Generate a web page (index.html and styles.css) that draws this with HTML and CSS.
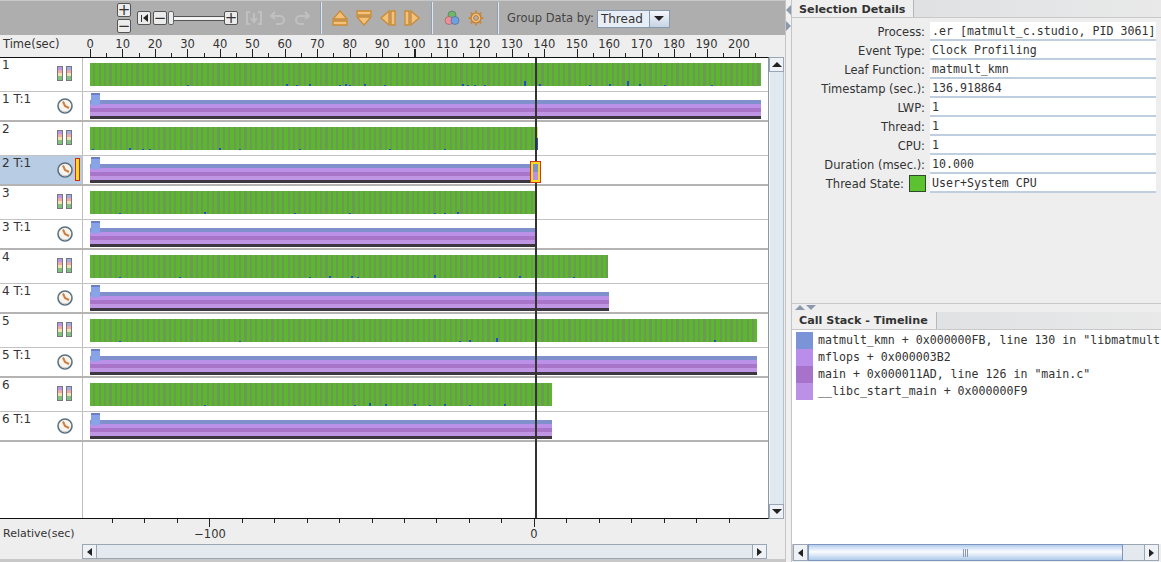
FILE: index.html
```html
<!DOCTYPE html>
<html lang="en">
<head>
  <meta charset="UTF-8">
  <title>Timeline</title>
  <link rel="stylesheet" href="styles.css">
</head>
<body>
  <svg class="defs" width="0" height="0">
    <symbol id="stack" viewBox="0 0 15 15">
      <g shape-rendering="crispEdges">
        <rect x="0" y="0" width="6" height="15" fill="#77767c"/>
        <rect x="9" y="0" width="6" height="15" fill="#77767c"/>
        <rect x="1" y="1" width="4" height="3" fill="#b79be0"/>
        <rect x="1" y="4" width="4" height="3" fill="#f0a8ae"/>
        <rect x="1" y="7" width="4" height="3" fill="#ece6a8"/>
        <rect x="1" y="10" width="4" height="4" fill="#84c084"/>
        <rect x="10" y="1" width="4" height="3" fill="#a3ace6"/>
        <rect x="10" y="4" width="4" height="3" fill="#f0a8ae"/>
        <rect x="10" y="7" width="4" height="3" fill="#ece6a8"/>
        <rect x="10" y="10" width="4" height="4" fill="#84c084"/>
      </g>
    </symbol>
    <symbol id="clock" viewBox="0 0 16 16">
      <circle cx="8" cy="8" r="7" fill="#f8f4ea" stroke="#5a7184" stroke-width="1.6"/>
      <path d="M6 3.5 L8 8 L12 10" fill="none" stroke="#c8814a" stroke-width="2"/>
      <path d="M3.5 11.5a5.5 5.5 0 0 0 9 0" fill="none" stroke="#c9ccd0"/>
    </symbol>
    <symbol id="eject-up" viewBox="0 0 16 16">
      <path d="M8 1 L15 9 H1 Z M1 11 H15 V15 H1 Z" fill="#f3c27a" stroke="#cc8a34" stroke-width="1.3"/>
    </symbol>
    <symbol id="eject-down" viewBox="0 0 16 16">
      <path d="M1 1 H15 V5 H1 Z M1 7 H15 L8 15 Z" fill="#f3c27a" stroke="#cc8a34" stroke-width="1.3"/>
    </symbol>
    <symbol id="eject-left" viewBox="0 0 16 16">
      <path d="M9 1 L1 8 L9 15 Z M11 1 H15 V15 H11 Z" fill="#f3c27a" stroke="#cc8a34" stroke-width="1.3"/>
    </symbol>
    <symbol id="eject-right" viewBox="0 0 16 16">
      <path d="M1 1 H5 V15 H1 Z M7 1 L15 8 L7 15 Z" fill="#f3c27a" stroke="#cc8a34" stroke-width="1.3"/>
    </symbol>
  </svg>

  <div class="app">
    <div class="left">
      <div class="toolbar">
        <div class="zoom-stack">
          <button class="tool">+</button>
          <button class="tool">&minus;</button>
        </div>
        <div class="slider">
          <button class="tool reset"><span class="reset-bar"></span><span class="arrow-left"></span></button>
          <button class="tool">&minus;</button>
          <span class="thumb"></span>
          <span class="slider-line"></span>
          <button class="tool">+</button>
        </div>
        <div class="disabled-icons">
          <svg width="16" height="16" viewBox="0 0 16 16"><path d="M4 2H1V14H4M12 2H15V14H12M8 3V11M5 8L8 12L11 8" fill="none" stroke="#c0c0c0" stroke-width="2"/></svg>
          <svg width="16" height="16" viewBox="0 0 16 16"><path d="M5 2L1 6L5 9M2 6H10A4 4 0 0 1 10 14H6" fill="none" stroke="#c0c0c0" stroke-width="2"/></svg>
          <svg width="16" height="16" viewBox="0 0 16 16"><path d="M11 2L15 6L11 9M14 6H6A4 4 0 0 0 6 14H10" fill="none" stroke="#c0c0c0" stroke-width="2"/></svg>
        </div>
        <span class="tool-sep first"></span>
        <div class="nav-icons">
          <svg width="16" height="16"><use href="#eject-up"/></svg>
          <svg width="16" height="16"><use href="#eject-down"/></svg>
          <svg width="16" height="16"><use href="#eject-left"/></svg>
          <svg width="16" height="16"><use href="#eject-right"/></svg>
        </div>
        <span class="tool-sep second"></span>
        <div class="misc-icons">
          <svg width="16" height="16" viewBox="0 0 16 16">
            <circle cx="8" cy="5" r="4" fill="#6fb56a" stroke="#55705a" stroke-width=".6"/>
            <circle cx="5" cy="10.5" r="4" fill="#ee8f97" stroke="#8a5a62" stroke-width=".6"/>
            <circle cx="11" cy="10.5" r="4" fill="#6f9fe0" stroke="#4f6688" stroke-width=".6"/>
          </svg>
          <svg width="16" height="16" viewBox="0 0 16 16">
            <circle cx="8" cy="8" r="5" fill="#f3c27a" stroke="#b87a34" stroke-width="1.2"/>
            <circle cx="8" cy="8" r="2.4" fill="#b0b0b0" stroke="#b87a34"/>
            <path d="M8 0.5V3M8 13V15.5M0.5 8H3M13 8H15.5M2.7 2.7L4.5 4.5M11.5 11.5L13.3 13.3M2.7 13.3L4.5 11.5M11.5 4.5L13.3 2.7" stroke="#c98a3e" stroke-width="2"/>
          </svg>
        </div>
        <span class="tool-sep third"></span>
        <span class="group-label">Group Data by:</span>
        <div class="combo">
          <span class="combo-text">Thread</span>
          <span class="combo-btn"><span class="arrow-down"></span></span>
        </div>
      </div>

      <div class="ruler">
        <div class="axis-title">Time(sec)</div>
        <div class="scale">
          <div class="scale-labels">
            <span>0</span><span>10</span><span>20</span><span>30</span><span>40</span><span>50</span><span>60</span>
            <span>70</span><span>80</span><span>90</span><span>100</span><span>110</span><span>120</span><span>130</span>
            <span>140</span><span>150</span><span>160</span><span>170</span><span>180</span><span>190</span><span>200</span>
          </div>
        </div>
      </div>

      <div class="main">
        <div class="rows">
          <div class="row event">
            <div class="label"><span>1</span><svg class="icon" width="15" height="15"><use href="#stack"/></svg></div>
            <div class="track"><div class="bar" style="width:671px">
              <svg class="specks" width="671" height="23"><path d="M98 23v-1M197 23v-2M207 23v-1M220 23v-2M250 23v-1M256 23v-2M260 23v-1M275 23v-2M295 23v-1M373 23v-2M378 23v-1M385 23v-1M395 23v-1M435 23v-5M450 23v-2M500 23v-1M520 23v-2M538 23v-5M550 23v-2M575 23v-1M622 23v-1"/></svg>
            </div></div>
          </div>
          <div class="row thread">
            <div class="label"><span>1 T:1</span><svg class="icon" width="16" height="16"><use href="#clock"/></svg></div>
            <div class="track"><div class="stack-bar" style="width:671px"><span class="hump"></span></div></div>
          </div>
          <div class="row event">
            <div class="label"><span>2</span><svg class="icon" width="15" height="15"><use href="#stack"/></svg></div>
            <div class="track"><div class="bar" style="width:446px">
              <svg class="specks" width="446" height="23"><path d="M3 23v-1M40 23v-2M53 23v-1M60 23v-1M130 23v-2M150 23v-1M210 23v-1M300 23v-1M355 23v-1"/></svg>
              <span class="tail"></span>
            </div></div>
          </div>
          <div class="row thread selected">
            <div class="label"><span>2 T:1</span><svg class="icon" width="16" height="16"><use href="#clock"/></svg><span class="marker"></span></div>
            <div class="track"><div class="stack-bar" style="width:446px"><span class="hump"></span></div><span class="sel-box"></span></div>
          </div>
          <div class="row event">
            <div class="label"><span>3</span><svg class="icon" width="15" height="15"><use href="#stack"/></svg></div>
            <div class="track"><div class="bar" style="width:446px">
              <svg class="specks" width="446" height="23"><path d="M30 23v-1M115 23v-2M205 23v-1M260 23v-1M345 23v-1M355 23v-1M368 23v-2"/></svg>
            </div></div>
          </div>
          <div class="row thread">
            <div class="label"><span>3 T:1</span><svg class="icon" width="16" height="16"><use href="#clock"/></svg></div>
            <div class="track"><div class="stack-bar" style="width:446px"><span class="hump"></span></div></div>
          </div>
          <div class="row event">
            <div class="label"><span>4</span><svg class="icon" width="15" height="15"><use href="#stack"/></svg></div>
            <div class="track"><div class="bar" style="width:518px">
              <svg class="specks" width="518" height="23"><path d="M30 23v-1M90 23v-1M220 23v-1M240 23v-2M262 23v-2M268 23v-1M345 23v-3M410 23v-1M430 23v-2M484 23v-1"/></svg>
            </div></div>
          </div>
          <div class="row thread">
            <div class="label"><span>4 T:1</span><svg class="icon" width="16" height="16"><use href="#clock"/></svg></div>
            <div class="track"><div class="stack-bar" style="width:519px"><span class="hump"></span></div></div>
          </div>
          <div class="row event">
            <div class="label"><span>5</span><svg class="icon" width="15" height="15"><use href="#stack"/></svg></div>
            <div class="track"><div class="bar" style="width:667px">
              <svg class="specks" width="667" height="23"><path d="M30 23v-1M150 23v-1M370 23v-1M380 23v-2M407 23v-4M625 23v-2"/></svg>
            </div></div>
          </div>
          <div class="row thread">
            <div class="label"><span>5 T:1</span><svg class="icon" width="16" height="16"><use href="#clock"/></svg></div>
            <div class="track"><div class="stack-bar" style="width:667px"><span class="hump"></span></div></div>
          </div>
          <div class="row event">
            <div class="label"><span>6</span><svg class="icon" width="15" height="15"><use href="#stack"/></svg></div>
            <div class="track"><div class="bar" style="width:462px">
              <svg class="specks" width="462" height="23"><path d="M115 23v-1M265 23v-1M280 23v-3M296 23v-2M325 23v-2M340 23v-1M355 23v-2M380 23v-1M415 23v-2"/></svg>
            </div></div>
          </div>
          <div class="row thread">
            <div class="label"><span>6 T:1</span><svg class="icon" width="16" height="16"><use href="#clock"/></svg></div>
            <div class="track"><div class="stack-bar" style="width:462px"><span class="hump"></span></div></div>
          </div>
          <div class="row filler"><div class="label"></div><div class="track"></div></div>
          <span class="cursor"></span>
        </div>
        <div class="vscroll">
          <span class="scroll-btn"><span class="arrow-up"></span></span>
          <span class="vtrack"></span>
          <span class="scroll-btn"><span class="arrow-down"></span></span>
        </div>
      </div>

      <div class="relative-row">
        <div class="rel-inner">
          <span class="rel-title">Relative(sec)</span>
          <span class="rel-value">&minus;100</span>
          <span class="rel-value zero">0</span>
        </div>
      </div>
      <div class="hscroll timeline-scroll">
        <span class="scroll-btn"><span class="arrow-left"></span></span>
        <span class="htrack"></span>
        <span class="scroll-btn"><span class="arrow-right"></span></span>
      </div>
      <div class="bottom-strip"></div>
    </div>

    <div class="splitter">
      <span class="arrow-left gray"></span>
      <span class="arrow-right gray"></span>
    </div>

    <div class="right">
      <div class="tabbar upper"><span class="tab">Selection Details</span></div>
      <div class="details">
        <div class="detail"><label>Process:</label><span class="value">.er [matmult_c.studio, PID 3061]</span></div>
        <div class="detail"><label>Event Type:</label><span class="value">Clock Profiling</span></div>
        <div class="detail"><label>Leaf Function:</label><span class="value">matmult_kmn</span></div>
        <div class="detail"><label>Timestamp (sec.):</label><span class="value">136.918864</span></div>
        <div class="detail"><label>LWP:</label><span class="value">1</span></div>
        <div class="detail"><label>Thread:</label><span class="value">1</span></div>
        <div class="detail"><label>CPU:</label><span class="value">1</span></div>
        <div class="detail"><label>Duration (msec.):</label><span class="value">10.000</span></div>
        <div class="detail"><label class="with-swatch">Thread State:<i class="state-swatch"></i></label><span class="value">User+System CPU</span></div>
      </div>
      <div class="hsplit">
        <span class="arrow-up gray"></span>
        <span class="arrow-down gray"></span>
      </div>
      <div class="tabbar lower"><span class="tab">Call Stack - Timeline</span></div>
      <div class="callstack">
        <div class="frame"><i class="swatch c1"></i><span>matmult_kmn + 0x000000FB, line 130 in "libmatmult</span></div>
        <div class="frame"><i class="swatch c2"></i><span>mflops + 0x000003B2</span></div>
        <div class="frame"><i class="swatch c3"></i><span>main + 0x000011AD, line 126 in "main.c"</span></div>
        <div class="frame"><i class="swatch c4"></i><span>__libc_start_main + 0x000000F9</span></div>
      </div>
      <div class="hscroll stack-scroll">
        <span class="scroll-btn"><span class="arrow-left"></span></span>
        <span class="hthumb"><span class="grip"></span></span>
        <span class="htrack"></span>
        <span class="scroll-btn"><span class="arrow-right"></span></span>
      </div>
    </div>
  </div>
</body>
</html>
```

FILE: styles.css
```css
html, body {
  margin: 0;
  padding: 0;
  height: 562px;
  overflow: hidden;
  background: #eeeeee;
  font-family: "DejaVu Sans", sans-serif;
  font-size: 11.5px;
  color: #333;
}

.defs {
  position: absolute;
}

.app {
  display: flex;
  height: 562px;
}

/* left side */
.left {
  width: 785px;
  display: flex;
  flex-direction: column;
  flex: none;
  border-right: 1px solid #c4c4c4;
}

.toolbar {
  height: 35px;
  flex: none;
  box-sizing: border-box;
  background: #aeaeae;
  display: flex;
  align-items: center;
  padding-left: 117px;
  border-top: 1px solid #c8c8c8;
}

.tool {
  width: 14px;
  height: 14px;
  padding: 0;
  box-sizing: border-box;
  border: 1px solid #555;
  border-radius: 2px;
  background: #ececec;
  color: #333;
  font-family: "DejaVu Sans", sans-serif;
  font-size: 15px;
  line-height: 10px;
  display: flex;
  align-items: center;
  justify-content: center;
}

.zoom-stack {
  display: flex;
  flex-direction: column;
  gap: 2px;
}

.slider {
  display: flex;
  align-items: center;
  margin-left: 6px;
  gap: 2px;
}

.reset {
  gap: 1px;
}

.reset-bar {
  width: 1px;
  height: 7px;
  background: #333;
}

.thumb {
  width: 6px;
  height: 14px;
  margin-left: -1px;
  box-sizing: border-box;
  background: #ececec;
  border: 1px solid #666;
  border-radius: 2px;
}

.slider-line {
  width: 50px;
  height: 3px;
  margin: 0 -2px;
  background: #f4f4f4;
  border-top: 1px solid #555;
  border-bottom: 1px solid #555;
}

.disabled-icons {
  display: flex;
  gap: 8px;
  margin-left: 8px;
}

.tool-sep {
  width: 1px;
  height: 32px;
  background: #dfe7f0;
  border-left: 1px solid #8fa0b4;
}

.tool-sep.first {
  margin-left: 10px;
}

.tool-sep.second {
  margin-left: 11px;
}

.tool-sep.third {
  margin-left: 13px;
}

.nav-icons {
  display: flex;
  gap: 8px;
  margin-left: 10px;
}

.misc-icons {
  display: flex;
  gap: 8px;
  margin-left: 11px;
}

.group-label {
  margin-left: 8px;
  color: #444;
}

.combo {
  display: flex;
  height: 18px;
  margin-top: 1px;
  margin-left: 3px;
  box-sizing: border-box;
  border: 1px solid #8799ad;
}

.combo-text {
  width: 51px;
  padding-left: 3px;
  box-sizing: border-box;
  background: #e8eef5;
  line-height: 16px;
  font-size: 12px;
}

.combo-btn {
  width: 19px;
  background: linear-gradient(#f6f8fb, #c6d4e4);
  border-left: 1px solid #8799ad;
  display: flex;
  align-items: center;
  justify-content: center;
}

/* little triangles for scroll buttons */
.arrow-up, .arrow-down, .arrow-left, .arrow-right {
  display: block;
  width: 0;
  height: 0;
  border-style: solid;
  border-color: transparent;
}

.arrow-up {
  border-width: 0 5px 5px;
  border-bottom-color: #222;
}

.arrow-down {
  border-width: 5px 5px 0;
  border-top-color: #222;
}

.arrow-left {
  border-width: 4px 5px 4px 0;
  border-right-color: #222;
}

.arrow-right {
  border-width: 4px 0 4px 5px;
  border-left-color: #222;
}

.ruler {
  height: 22px;
  flex: none;
  display: flex;
}

.axis-title {
  width: 90px;
  flex: none;
  box-sizing: border-box;
  padding: 2px 0 0 3px;
  line-height: 14px;
}

.scale {
  width: 667px;
  background:
    repeating-linear-gradient(90deg, #222 0 1px, transparent 1px 32.45px) left bottom / 100% 8px no-repeat,
    repeating-linear-gradient(90deg, transparent 0 16.2px, #222 16.2px 17.2px, transparent 17.2px 32.45px) left bottom / 100% 4px no-repeat;
}

.scale-labels {
  display: flex;
  margin-left: -16px;
  padding-top: 2px;
  line-height: 14px;
}

.scale-labels span {
  flex: none;
  width: 32.45px;
  text-align: center;
}

.main {
  flex: none;
  height: 462px;
  display: flex;
}

.rows {
  position: relative;
  width: 769px;
  flex: none;
  box-sizing: border-box;
  display: flex;
  flex-direction: column;
  background: #fff;
  border-top: 1px solid #111;
  border-bottom: 1px solid #111;
  border-right: 1px solid #8c97a3;
}

.row {
  display: flex;
  flex: none;
}

.row.event {
  height: 34px;
  border-bottom: 1px solid #c4c2c2;
  box-sizing: border-box;
}

.row.thread {
  height: 30px;
  border-bottom: 2px solid #b6b3b3;
  box-sizing: border-box;
}

.row.filler {
  flex: 1;
}

.label {
  position: relative;
  width: 83px;
  flex: none;
  box-sizing: border-box;
  border-right: 1px solid #bdbdbd;
  padding-left: 2px;
  font-size: 12px;
  line-height: 14px;
}

.label .icon {
  position: absolute;
  left: 57px;
  top: 8px;
}

.thread .label .icon {
  top: 6px;
}

.selected .label {
  background: #b8cce4;
}

.marker {
  position: absolute;
  left: 75px;
  top: 2px;
  width: 5px;
  height: 23px;
  box-sizing: border-box;
  background: #f7dc1e;
  border: 1px solid #cc2b1d;
}

.track {
  position: relative;
  flex: 1;
  padding-left: 7px;
}

.bar {
  position: relative;
  height: 23px;
  margin-top: 5px;
  background: repeating-linear-gradient(90deg, #5cb62e 0 3.2px, #6a9a55 3.2px 5.4px);
}

.specks {
  position: absolute;
  left: 0;
  top: 0;
  shape-rendering: crispEdges;
}

.specks path {
  stroke: #1f4fc4;
  stroke-width: 2;
  fill: none;
}

.tail {
  position: absolute;
  left: 100%;
  top: 0;
  width: 2px;
  height: 23px;
  background: linear-gradient(#e8e24a 0 50%, #1f4fc4 50%);
}

.stack-bar {
  position: relative;
  height: 19px;
  margin-top: 8px;
  background: linear-gradient(
    #7f90cd 0 4px,
    #bb90e8 4px 8px,
    #a875c9 8px 12px,
    #c096e4 12px 16px,
    #3c3740 16px 19px
  );
}

.hump {
  position: absolute;
  left: 1px;
  top: -7px;
  width: 9px;
  height: 12px;
  background: linear-gradient(#6c7fc2 0 2px, #88a3e6 2px);
}

.sel-box {
  position: absolute;
  z-index: 2;
  left: 447px;
  top: 5px;
  width: 11px;
  height: 22px;
  box-sizing: border-box;
  border: 1px solid #cc3a1d;
  box-shadow: inset 0 0 0 2px #f7dc1e;
  background: linear-gradient(#7f90cd 0 50%, #bb90e8 50%);
}

.cursor {
  position: absolute;
  z-index: 1;
  left: 535px;
  top: 0;
  bottom: 0;
  width: 2px;
  background: #333;
}

.vscroll {
  width: 15px;
  flex: none;
  display: flex;
  flex-direction: column;
}

.scroll-btn {
  width: 15px;
  height: 15px;
  flex: none;
  box-sizing: border-box;
  background: #eef1f5;
  border: 1px solid #9aa6b4;
  display: flex;
  align-items: center;
  justify-content: center;
}

.vtrack {
  flex: 1;
  background: #e0e8f0;
  border-left: 1px solid #f8f8f8;
  border-right: 1px solid #b4c0cc;
}

.relative-row {
  height: 25px;
  flex: none;
  width: 769px;
  background:
    repeating-linear-gradient(90deg, transparent 0 97.3px, #222 97.3px 98.3px, transparent 98.3px 324.5px) 112px top / 430px 8px no-repeat,
    repeating-linear-gradient(90deg, #222 0 1px, transparent 1px 32.45px) 112px top / 620px 4px no-repeat;
}

.rel-inner {
  display: flex;
  padding-top: 8px;
  line-height: 14px;
}

.rel-title {
  width: 190px;
  flex: none;
  box-sizing: border-box;
  padding-left: 3px;
  font-size: 11px;
}

.rel-value {
  width: 40px;
  text-align: center;
}

.rel-value.zero {
  margin-left: 284px;
}

.hscroll {
  display: flex;
  flex: none;
}

.timeline-scroll {
  height: 15px;
  margin-left: 82px;
  width: 685px;
}

.htrack {
  flex: 1;
  background: #e4e9ef;
  border-top: 1px solid #9aa6b4;
  border-bottom: 1px solid #9aa6b4;
}

.bottom-strip {
  flex: 1;
  background: #c8c8c8;
}

/* splitter between the panes */
.splitter {
  width: 6px;
  flex: none;
  display: flex;
  flex-direction: column;
  gap: 6px;
  padding-top: 5px;
  box-sizing: border-box;
  background: #f0f0f0;
  border-right: 1px solid #c4c4c4;
}

.arrow-left.gray {
  border-right-color: #8a9aac;
  border-width: 5px 5px 5px 0;
}

.arrow-right.gray {
  border-left-color: #8a9aac;
  border-width: 5px 0 5px 5px;
}

.arrow-up.gray {
  border-bottom-color: #8a9aac;
}

.arrow-down.gray {
  border-top-color: #8a9aac;
}

/* right side */
.right {
  flex: 1;
  min-width: 0;
  display: flex;
  flex-direction: column;
}

.tabbar {
  height: 18px;
  flex: none;
  display: flex;
  background: linear-gradient(90deg, #d9dde0, #e9e9e9);
  border-bottom: 1px solid #c8c8c8;
  box-sizing: border-box;
}

.tab {
  width: 122px;
  box-sizing: border-box;
  background: #efefef;
  border-right: 1px solid #b8b8b8;
  padding-left: 7px;
  font-weight: bold;
  font-size: 11.2px;
  line-height: 18px;
  white-space: nowrap;
}

.tabbar.upper .tab {
  line-height: 20px;
}

.details {
  height: 286px;
  flex: none;
  box-sizing: border-box;
  padding-top: 4px;
  border-bottom: 1px solid #c8c8c8;
}

.detail {
  display: flex;
  height: 19px;
}

.detail label {
  width: 133px;
  flex: none;
  display: flex;
  justify-content: flex-end;
  align-items: center;
}

.detail label.with-swatch {
  padding-right: 21px;
  box-sizing: border-box;
}

.state-swatch {
  width: 17px;
  height: 17px;
  margin-left: 5px;
  margin-right: -22px;
  flex: none;
  box-sizing: border-box;
  background: #5cc22f;
  border: 1px solid #2e4a2a;
}

.value {
  width: 226px;
  margin-left: 5px;
  flex: none;
  box-sizing: border-box;
  background: #fff;
  border-bottom: 2px solid #bfcfe0;
  padding-left: 2px;
  font-family: "DejaVu Sans Mono", monospace;
  font-size: 11.6px;
  line-height: 18px;
  white-space: nowrap;
  overflow: hidden;
}

.hsplit {
  height: 8px;
  flex: none;
  display: flex;
  gap: 1px;
  padding: 1px 0 0 3px;
  box-sizing: border-box;
}

.tabbar.lower .tab {
  width: 145px;
}

.callstack {
  flex: 1;
  min-height: 0;
  background: #fff;
  padding: 2px 0 0 4px;
  overflow: hidden;
}

.frame {
  display: flex;
  height: 17px;
  align-items: center;
  white-space: nowrap;
}

.frame span {
  font-family: "DejaVu Sans Mono", monospace;
  font-size: 11.6px;
  margin-left: 5px;
  padding-bottom: 2px;
}

.swatch {
  width: 17px;
  height: 17px;
  flex: none;
}

.c1 { background: #7b94d8; }
.c2 { background: #b98eea; }
.c3 { background: #a772c9; }
.c4 { background: #bb90e6; }

.stack-scroll {
  height: 17px;
  margin-bottom: 1px;
  margin-right: 2px;
  border-left: 1px solid #c8c8c8;
}

.stack-scroll .scroll-btn {
  height: 17px;
}

.hthumb {
  width: 315px;
  flex: none;
  box-sizing: border-box;
  border: 1px solid #7c96c0;
  background: linear-gradient(#b5cdee, #fbfdff 45%, #aecaea);
  display: flex;
  align-items: center;
  justify-content: center;
}

.grip {
  width: 5px;
  height: 8px;
  background: repeating-linear-gradient(90deg, #8a9ab0 0 1px, transparent 1px 2px);
}
```
